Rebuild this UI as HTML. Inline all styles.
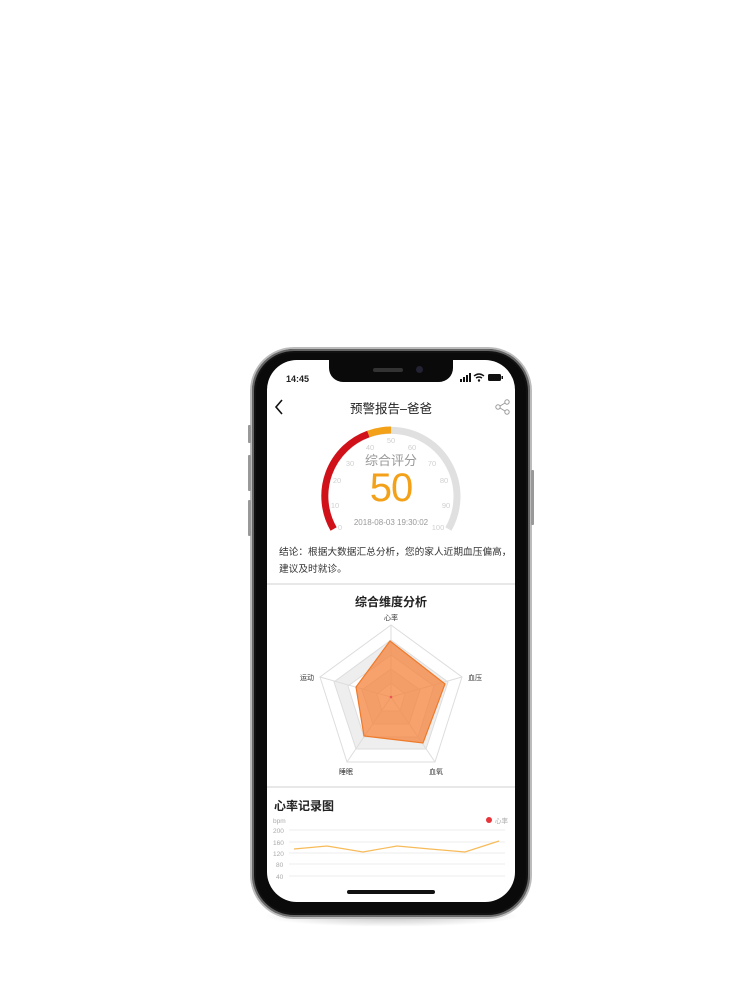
<!DOCTYPE html>
<html><head><meta charset="utf-8">
<style>
*{margin:0;padding:0;box-sizing:border-box}
body{width:750px;height:996px;background:#fff;position:relative;overflow:hidden;font-family:"Liberation Sans","Noto Sans CJK SC",sans-serif}
.shadow{position:absolute;left:262px;top:905px;width:258px;height:22px;border-radius:50%;background:radial-gradient(ellipse,rgba(0,0,0,.25),rgba(0,0,0,0) 70%)}
.phone{position:absolute;left:250px;top:347px;width:282px;height:572px;border-radius:44px;background:#0a0a0a;border:2px solid #bbb;box-shadow:inset 0 0 0 2px #666,inset 0 0 0 4px #111}
.btn{position:absolute;background:#999;width:3px;border-radius:1px}
.screen{position:absolute;left:267px;top:360px;width:248px;height:542px;border-radius:30px;background:#fff;overflow:hidden}
.notch{position:absolute;left:62px;top:0;width:124px;height:22px;background:#0a0a0a;border-radius:0 0 14px 14px}
.t{position:absolute;white-space:nowrap;color:#222}
.hr{position:absolute;left:0;width:248px;height:2px;background:#e8e8e8}
</style></head><body>
<div class="shadow"></div>
<div class="phone"></div>
<div class="btn" style="left:248px;top:425px;height:18px"></div>
<div class="btn" style="left:248px;top:455px;height:36px"></div>
<div class="btn" style="left:248px;top:500px;height:36px"></div>
<div class="btn" style="left:531px;top:470px;height:55px"></div>
<div class="screen">
  <div class="notch"><div style="position:absolute;left:44px;top:8px;width:30px;height:4px;border-radius:2px;background:#333"></div><div style="position:absolute;left:87px;top:6px;width:7px;height:7px;border-radius:50%;background:#223"></div></div>
  <div class="t" style="left:19px;top:14px;font-size:9px;font-weight:bold">14:45</div>
  <svg style="position:absolute;left:193px;top:13px" width="44" height="10">
    <rect x="0" y="6" width="2" height="3" fill="#111"/><rect x="3" y="4" width="2" height="5" fill="#111"/><rect x="6" y="2" width="2" height="7" fill="#111"/><rect x="9" y="0" width="2" height="9" fill="#111"/>
    <path d="M14 3 Q19 -1 24 3 M16 5 Q19 3 22 5" stroke="#111" stroke-width="1.4" fill="none"/><circle cx="19" cy="7.5" r="1.2" fill="#111"/>
    <rect x="28" y="1" width="13" height="7" rx="1.5" fill="#111"/><rect x="41.5" y="3" width="1.5" height="3" fill="#111"/>
  </svg>
  <svg style="position:absolute;left:6px;top:39px" width="12" height="16"><path d="M9 1 L3 8 L9 15" stroke="#111" stroke-width="1.6" fill="none"/></svg>
  <div class="t" style="left:0;width:248px;text-align:center;top:38px;font-size:12.5px">预警报告–爸爸</div>
  <svg style="position:absolute;left:228px;top:39px" width="16" height="16" fill="none" stroke="#999" stroke-width="1"><circle cx="12" cy="3" r="2.2"/><circle cx="3" cy="8" r="2.2"/><circle cx="12" cy="13" r="2.2"/><path d="M5 7 L10 4 M5 9 L10 12"/></svg>
  <svg style="position:absolute;left:0;top:0" width="248" height="200">
    <g transform="translate(124,136)" fill="none" stroke-width="7">
      <path d="M-57.4 33 A66 66 0 1 1 57.4 33" stroke="#e0e0e0"/>
      <path d="M-57.4 33 A66 66 0 0 1 -22.6 -62" stroke="#d0111a"/>
      <path d="M-22.6 -62 A66 66 0 0 1 0 -66" stroke="#f4a11a"/>
    </g>
    <g font-size="7.5" fill="#d0d0d0" text-anchor="middle" font-family="Liberation Sans">
      <text x="73" y="170">0</text><text x="68" y="148">10</text><text x="70" y="123">20</text><text x="83" y="106">30</text><text x="103" y="90">40</text><text x="124" y="83">50</text><text x="145" y="90">60</text><text x="165" y="106">70</text><text x="177" y="123">80</text><text x="179" y="148">90</text><text x="171" y="170">100</text>
    </g>
  </svg>
  <div class="t" style="left:0;width:248px;text-align:center;top:90px;font-size:13px;color:#999">综合评分</div>
  <div class="t" style="left:0;width:248px;text-align:center;top:106px;font-size:40px;color:#f4a11a;letter-spacing:-1px">50</div>
  <div class="t" style="left:0;width:248px;text-align:center;top:158px;font-size:8px;color:#999">2018-08-03 19:30:02</div>
  <div class="t" style="left:12px;top:184px;font-size:9.7px;line-height:17px;color:#333">结论：根据大数据汇总分析，您的家人近期血压偏高，<br>建议及时就诊。</div>
  <div class="hr" style="top:223px"></div>
  <div class="t" style="left:0;width:248px;text-align:center;top:233px;font-size:12px;font-weight:bold">综合维度分析</div>
  <svg style="position:absolute;left:0;top:250px" width="248" height="180">
    <g transform="translate(-267,-610)">
      <polygon points="391,625 462,677 435,762 347,762 320,677" fill="#fff" stroke="#ddd"/>
      <polygon points="391,640 448,682 426,749 356,749 334,682" fill="#eee" stroke="#ddd"/>
      <polygon points="391,655 434,686 418,737 364,737 348,686" fill="#fff" stroke="#ddd"/>
      <polygon points="391,669 420,690 409,724 373,724 362,690" fill="#eee" stroke="#ddd"/>
      <polygon points="391,683 405,694 400,711 382,711 377,694" fill="#fff" stroke="#ddd"/>
      <path d="M391 697 L391 625 M391 697 L462 677 M391 697 L435 762 M391 697 L347 762 M391 697 L320 677" stroke="#ddd"/>
      <polygon points="390,641 445,684 423,743 364,736 356,687" fill="rgba(244,130,60,.75)" stroke="#ef7a2a" stroke-width="1.2"/>
      <circle cx="391" cy="697" r="1.3" fill="#e55"/>
    </g>
    <g font-size="7" fill="#333" text-anchor="middle">
      <text x="124" y="10">心率</text><text x="208" y="70">血压</text><text x="169" y="164">血氧</text><text x="79" y="164">睡眠</text><text x="40" y="70">运动</text>
    </g>
  </svg>
  <div class="hr" style="top:426px"></div>
  <div class="t" style="left:7px;top:437px;font-size:12px;font-weight:bold">心率记录图</div>
  <svg style="position:absolute;left:0;top:450px" width="248" height="80">
    <g transform="translate(-267,-810)" font-size="6.5" fill="#aaa">
      <text x="273" y="823">bpm</text>
      <circle cx="489" cy="820" r="3" fill="#e8343b"/><text x="495" y="823">心率</text>
      <text x="273" y="833">200</text><text x="273" y="845">160</text><text x="273" y="856">120</text><text x="276" y="867">80</text><text x="276" y="879">40</text>
      <path d="M289 830H505M289 842H505M289 853H505M289 864H505M289 876H505" stroke="#eee"/>
      <polyline points="294,849 327,846 363,852 397,846 430,849 465,852 499,841" fill="none" stroke="#f7bb5a" stroke-width="1.2"/>
    </g>
  </svg>
  <div style="position:absolute;left:80px;top:530px;width:88px;height:4px;border-radius:2px;background:#111"></div>
</div>
</body></html>
